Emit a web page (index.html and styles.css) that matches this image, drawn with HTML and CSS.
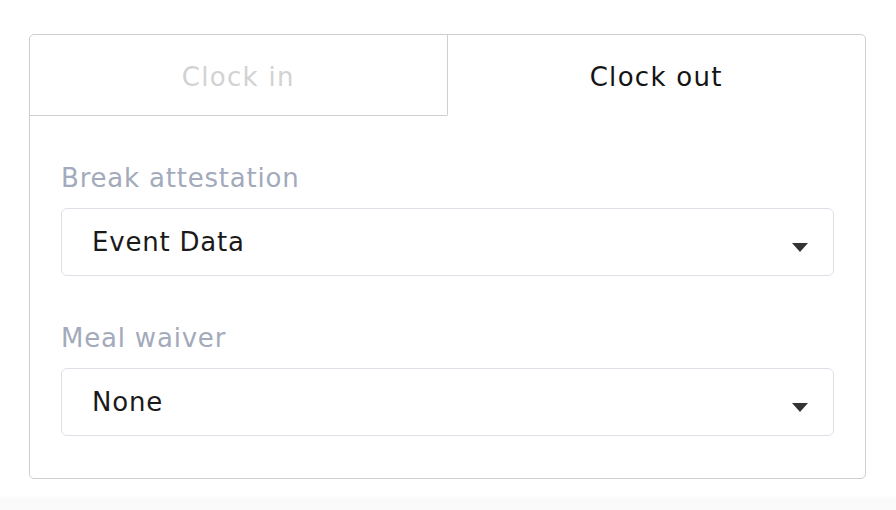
FILE: index.html
```html
<!DOCTYPE html>
<html lang="en">
<head>
<meta charset="utf-8">
<title>Clock out</title>
<link rel="stylesheet" href="styles.css">
</head>
<body>
<div class="page">
  <div class="card">
    <div class="tabs">
      <div class="tab tab-inactive">Clock in</div>
      <div class="tab tab-active">Clock out</div>
    </div>
    <div class="form">
      <div class="field">
        <div class="label">Break attestation</div>
        <div class="select">
          <span class="value">Event Data</span>
          <svg class="caret" width="16" height="9" viewBox="0 0 16 9"><path d="M0 0H16L8 9Z" fill="#333"/></svg>
        </div>
      </div>
      <div class="field">
        <div class="label">Meal waiver</div>
        <div class="select">
          <span class="value">None</span>
          <svg class="caret" width="16" height="9" viewBox="0 0 16 9"><path d="M0 0H16L8 9Z" fill="#333"/></svg>
        </div>
      </div>
    </div>
  </div>
  <div class="footer"></div>
</div>
</body>
</html>
```
FILE: styles.css
```css
html, body {
  margin: 0;
  padding: 0;
  background: #ffffff;
}
body {
  font-family: "DejaVu Sans", "Noto Sans", sans-serif;
  color: #1a1a1a;
}
.page {
  padding: 34px 30px 0 29px;
  height: 510px;
  box-sizing: border-box;
  display: flex;
  flex-direction: column;
}
.card {
  border: 1px solid #cfcfcf;
  border-radius: 5px;
  overflow: hidden;
}
.tabs {
  display: grid;
  grid-template-columns: 1fr 1fr;
  height: 81px;
}
.tab {
  display: flex;
  align-items: center;
  justify-content: center;
  font-size: 26px;
  letter-spacing: 1.3px;
  padding-top: 3px;
  box-sizing: border-box;
}
.tab-inactive {
  color: #d2d2d2;
  border-right: 1px solid #cfcfcf;
  border-bottom: 1px solid #cfcfcf;
  border-bottom-right-radius: 2px;
}
.tab-active {
  color: #141414;
}
.form {
  padding: 46px 31px 42px 31px;
  display: flex;
  flex-direction: column;
  gap: 46px;
}
.field {
  display: flex;
  flex-direction: column;
  gap: 14px;
}
.label {
  font-size: 26px;
  line-height: 32px;
  color: #a3aabb;
  letter-spacing: 0.8px;
}
.select {
  height: 68px;
  box-sizing: border-box;
  border: 1px solid #dcdfe6;
  border-radius: 6px;
  display: flex;
  align-items: center;
  justify-content: space-between;
  padding: 0 25px 0 30px;
}
.value {
  font-size: 26px;
  letter-spacing: 0.8px;
  color: #1a1a1a;
}
.caret {
  margin-top: 10px;
}
.footer {
  margin: 15px -30px 0 -29px;
  flex: 1;
  background: linear-gradient(#ffffff, #fafafa 40%);
}
```
